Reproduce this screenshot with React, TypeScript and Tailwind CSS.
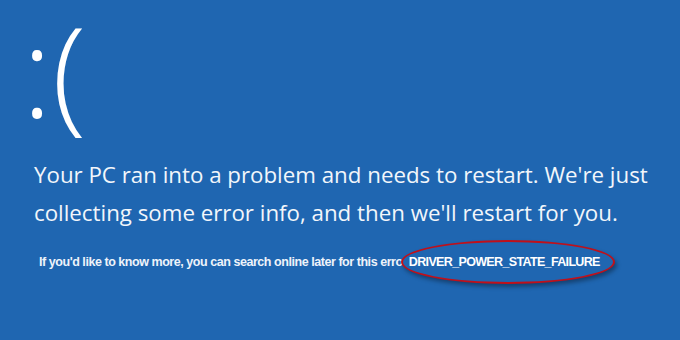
export default function App() {
  return (
    <div className="w-[680px] h-[340px] overflow-hidden bg-[#1f66b1] text-white">
      <div className="pl-[22px] pt-[1px] h-[156px] flex items-center text-[126px] leading-[126px] font-light font-['Open_Sans',sans-serif]">
        <span className="leading-[172px] block -mt-[18px] mb-[2px]">:(</span>
      </div>
      <div className="pl-[34px] text-[22.3px] leading-[38px] font-['Open_Sans',sans-serif] text-[#f2f6fb]">
        <div>Your PC ran into a problem and needs to restart. We're just</div>
        <div>collecting some error info, and then we'll restart for you.</div>
      </div>
      <div className="pl-[39px] mt-[8px] flex items-center font-['Liberation_Sans',Arial,sans-serif] font-bold text-[12.5px] tracking-[-0.45px] text-[#eef3fa]">
        <span className="whitespace-nowrap">If you'd like to know more, you can search online later for this error:</span>
        <span className="relative -ml-[10px] w-[214px] h-[44px] rounded-[50%] border-2 border-[#c0101a] bg-[#1f66b1] shadow-[2px_3px_4px_rgba(0,0,0,0.35)] flex items-center pl-[6px] text-[12.5px] tracking-[-0.65px] text-white">
          DRIVER_POWER_STATE_FAILURE
        </span>
      </div>
    </div>
  );
}
